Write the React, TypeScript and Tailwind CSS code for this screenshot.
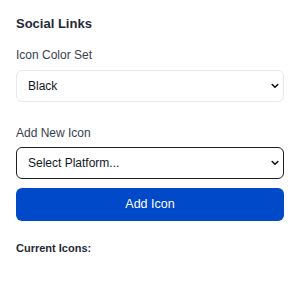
import React from 'react';

function Chevron() {
  return (
    <svg
      className="pointer-events-none absolute right-[5px] top-1/2 -translate-y-1/2"
      width="8"
      height="6"
      viewBox="0 0 8 6"
      fill="none"
    >
      <path d="M1.2 1.5 4 4.3 6.8 1.5" stroke="#111" strokeWidth="1.6" strokeLinecap="round" strokeLinejoin="round" />
    </svg>
  );
}

export default function App() {
  return (
    <div className="min-h-[282px] w-[300px] bg-white px-4 pt-[14px] font-['Liberation_Sans',Arial,sans-serif]">
      <h2 className="text-[13px] leading-5 font-bold text-[#1f2937]">Social Links</h2>

      <label className="mt-3 block text-[12px] leading-[18px] text-[#374151]">Icon Color Set</label>
      <div className="relative mt-1.5">
        <select
          defaultValue="black"
          className="block h-8 w-full appearance-none rounded-md border border-[#e5e7eb] bg-white pl-[11px] pr-5 text-[12px] text-[#111827] outline-none"
        >
          <option value="black">Black</option>
          <option value="color">Color</option>
          <option value="white">White</option>
        </select>
        <Chevron />
      </div>

      <label className="mt-[22px] block text-[12px] leading-[18px] text-[#374151]">Add New Icon</label>
      <div className="relative mt-[5px]">
        <select
          defaultValue=""
          className="block h-8 w-full appearance-none rounded-md border-[1.5px] border-[#1f1f1f] bg-white pl-[11px] pr-5 text-[12px] text-[#111827] outline-none"
        >
          <option value="">Select Platform...</option>
          <option value="facebook">Facebook</option>
          <option value="twitter">Twitter</option>
          <option value="instagram">Instagram</option>
        </select>
        <Chevron />
      </div>

      <button className="mt-[9px] block h-[33px] w-full rounded-md bg-[#0049c9] text-[12.5px] text-white">
        Add Icon
      </button>

      <h3 className="mt-[19px] text-[11px] leading-4 font-bold text-[#1f2937]">Current Icons:</h3>
    </div>
  );
}
